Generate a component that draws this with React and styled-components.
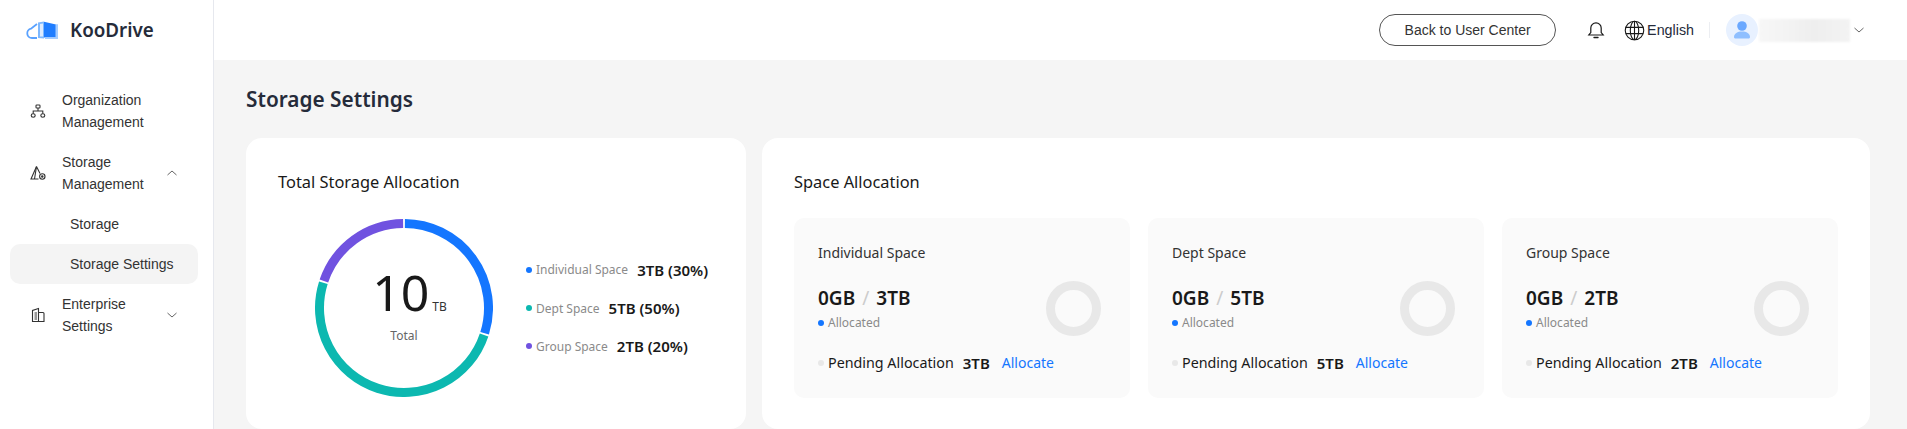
import React from "react";
import styled, { createGlobalStyle } from "styled-components";

const Global = createGlobalStyle`
  html, body { margin: 0; padding: 0; height: 100%; overflow: hidden; }
  body { background: #f5f5f5; font-family: "Noto Sans", "Liberation Sans", sans-serif; }
  #root { height: 429px; }
  * { box-sizing: border-box; }
`;

const Shell = styled.div`display: flex; height: 429px; overflow: hidden;`;
const Sidebar = styled.aside`width: 214px; flex: none; background: #fff; border-right: 1px solid #e6e8ee; font-family: "Liberation Sans", Arial, sans-serif;`;
const Brand = styled.div`height: 60px; display: flex; align-items: center; gap: 12px; padding-left: 26px;`;
const BrandName = styled.span`font-family: "Noto Sans", sans-serif; font-size: 18.800px; font-weight: 600; color: #252b3a;`;
const Nav = styled.nav`display: flex; flex-direction: column; padding: 20px 15px 0 10px;`;
const NavGroup = styled.div`display: flex; align-items: center; height: 62px; padding: 0 20px 0 20px;`;
const NavIcon = styled.span`width: 16px; display: flex; margin-right: 16px; flex: none;`;
const NavLabel = styled.span`flex: 1; font-size: 14px; line-height: 22px; color: #333;`;
const SubItem = styled.div`height: 40px; display: flex; align-items: center; padding-left: 60px; font-size: 14px; color: #333; border-radius: 10px; background: ${p => p.$active ? "#f4f4f4" : "transparent"};`;

const Main = styled.div`flex: 1; min-width: 0; display: flex; flex-direction: column;`;
const Header = styled.header`height: 60px; flex: none; background: #fff; display: flex; align-items: center; justify-content: flex-end; padding-right: 42px;`;
const BackButton = styled.button`width: 177px; height: 32px; border: 1px solid #555; border-radius: 16px; background: #fff; font: 14px "Liberation Sans", Arial, sans-serif; color: #333; padding: 0; margin-right: 31px;`;
const Bell = styled.span`display: flex; margin-right: 19px;`;
const LangBox = styled.div`display: flex; align-items: center; gap: 2px; font: 14.300px "Liberation Sans", Arial, sans-serif; color: #252b3a;`;
const Divider = styled.span`width: 1px; height: 16px; background: #eceef2; margin: 0 16px 0 15px;`;
const Avatar = styled.span`width: 32px; height: 32px; border-radius: 50%; background: #e8f1ff; display: flex; align-items: center; justify-content: center;`;
const Blurred = styled.span`width: 91px; height: 23px; margin-left: 1px; background: linear-gradient(90deg, #f7f7f7, #f3f3f3 30%, #eeeeee 60%, #f3f3f3); filter: blur(1px);`;
const UserChevron = styled.span`display: flex; margin-left: 3px;`;

const Content = styled.main`flex: 1; min-height: 0; padding: 0 37px 0 32px;`;
const PageTitle = styled.h1`margin: 0; height: 78px; display: flex; align-items: center; font-size: 20.800px; font-weight: 600; color: #252b3a;`;
const Cards = styled.div`display: flex; gap: 16px; height: 291px;`;
const Card = styled.section`background: #fff; border-radius: 16px; padding: 32px; flex: ${p => p.$grow ? 1 : "none"}; width: ${p => p.$grow ? "auto" : "500px"}; min-width: 0;`;
const CardTitle = styled.h2`margin: 0; font-size: 16.400px; font-weight: 400; line-height: 24px; color: #191919;`;

const ChartRow = styled.div`display: flex; align-items: center; margin-top: 25px;`;
const Donut = styled.div`position: relative; width: 178px; height: 178px; margin-left: 37px; flex: none;`;
const DonutCenter = styled.div`position: absolute; inset: 0; padding-bottom: 8px; display: flex; flex-direction: column; align-items: center; justify-content: center;`;
const Big = styled.div`display: flex; align-items: baseline; margin-left: 11px; font-size: 50px; line-height: 56px; font-weight: 400; color: #191919;`;
const Unit = styled.span`font-size: 12px; margin-left: 3px; color: #333;`;
const TotalText = styled.div`font-size: 12px; color: #666; margin-top: -8px;`;
const Legend = styled.ul`list-style: none; margin: 0 0 0 33px; padding: 0; display: flex; flex-direction: column; gap: 14.300px;`;
const LegendRow = styled.li`display: flex; align-items: center; height: 24px;`;
const Dot = styled.i`width: 6px; height: 6px; border-radius: 50%; background: ${p => p.$c}; flex: none; margin-right: 4px;`;
const LegendLabel = styled.span`font-size: 12px; color: #8a8a8a; margin-right: 9px;`;
const LegendValue = styled.b`font-size: 15px; font-weight: 600; color: #191919;`;

const Spaces = styled.div`display: flex; gap: 18px; margin-top: 24px;`;
const Space = styled.div`flex: 1; height: 180px; background: #fafafa; border-radius: 10px; padding: 24px; position: relative;`;
const SpaceName = styled.div`font-size: 14px; line-height: 22px; color: #333;`;
const Amount = styled.div`font-size: 19px; font-weight: 600; line-height: 26px; margin-top: 21px; color: #191919;`;
const Slash = styled.span`color: #ccc; font-weight: 400; margin: 0 7px;`;
const AllocRow = styled.div`display: flex; align-items: center; margin-top: 3px; font-size: 12px; color: #8a8a8a; line-height: 18px;`;
const PendingRow = styled.div`display: flex; align-items: center; margin-top: 20px; font-size: 14.300px; line-height: 22px; color: #191919;`;
const PendingValue = styled.b`font-size: 15px; font-weight: 600; margin-left: 9px;`;
const Link = styled.a`font-size: 14px; color: #1476ff; margin-left: 12px;`;
const Ring = styled.div`position: absolute; right: 29px; top: 63px; width: 55px; height: 55px; border: 9px solid #e8e8e8; border-radius: 50%;`;

const Chevron = ({ up }) => (
  <svg width="12" height="12" viewBox="0 0 12 12" fill="none" stroke="#666" strokeWidth="1">
    <path d={up ? "M1.500 8L6 4l4.500 4" : "M1.500 4L6 8l4.500-4"} />
  </svg>
);

const Logo = () => (
  <svg width="32" height="18" viewBox="0 0 32 18">
    <path d="M11 17H6a4.700 4.700 0 0 1-1-9.300L11 3" fill="none" stroke="#5aa2ff" strokeWidth="1.800" />
    <path d="M12 1.500L18 .5V17.500L12 17Z" fill="#7db8ff" />
    <path d="M14 3L17 2.500V15.500L14 15.500Z" fill="#dcebff" />
    <path d="M18 .8L30 3.500V16.500H18Z" fill="#1f7dff" />
    <path d="M29.500 3.200H32V18H19V16.300H29.500Z" fill="#a4ccff" />
  </svg>
);

const OrgIcon = () => (
  <svg width="16" height="16" viewBox="0 0 16 16" fill="none" stroke="#333" strokeWidth="1.100">
    <rect x="6" y="2" width="4" height="3" rx=".8" />
    <ellipse cx="3.200" cy="12.500" rx="2" ry="1.700" />
    <ellipse cx="12.800" cy="12.500" rx="2" ry="1.700" />
    <path d="M8 5v3M3.200 10.800V8h9.600v2.800" />
  </svg>
);
const StorageIcon = () => (
  <svg width="16" height="16" viewBox="0 0 16 16" fill="none" stroke="#333" strokeWidth="1.100">
    <path d="M6.500 1.500L1 14h7.500" />
    <path d="M6.500 1.500l3.500 7M4.500 14l2-12.500" />
    <circle cx="12.300" cy="11.500" r="2.700" />
    <circle cx="12.300" cy="11.500" r=".7" fill="#333" />
  </svg>
);
const EnterpriseIcon = () => (
  <svg width="16" height="16" viewBox="0 0 16 16" fill="none" stroke="#333" strokeWidth="1.100">
    <path d="M2.500 14.500V3.500L8.500 1.500V14.500Z" />
    <path d="M8.500 5.500H13a1 1 0 0 1 1 1V14.500H2.500" />
    <rect x="4.500" y="5" width="2.500" height="8" fill="#999" stroke="none" />
  </svg>
);
const BellIcon = () => (
  <svg width="18" height="18" viewBox="0 0 18 18" fill="none" stroke="#191919" strokeWidth="1.200">
    <path d="M1.800 14h14.400l-2-2.500V7a5.200 5.200 0 0 0-10.400 0v4.500Z" />
    <path d="M7 16.500h4" strokeLinecap="round" strokeWidth="1.400" />
  </svg>
);
const GlobeIcon = () => (
  <svg width="21" height="21" viewBox="0 0 20 20" fill="none" stroke="#191919" strokeWidth="1.050">
    <circle cx="10" cy="10" r="8.800" />
    <ellipse cx="10" cy="10" rx="4" ry="8.800" />
    <path d="M10 1.200V18.800M1.800 7h16.400M1.800 13h16.400" />
  </svg>
);
const PersonIcon = () => (
  <svg width="18" height="20" viewBox="0 0 18 20">
    <circle cx="9" cy="6" r="4.800" fill="#6aa8ff" />
    <path d="M1 17c0-3.500 3.500-5.500 8-5.500s8 2 8 5.500c0 1-.8 1.500-2 1.500H3c-1.200 0-2-.5-2-1.500Z" fill="#8fbfff" />
  </svg>
);

const seg = (a, b, r) => {
  const p = t => {
    const ang = (t - 90) * Math.PI / 180;
    return `${89 + r * Math.cos(ang)} ${89 + r * Math.sin(ang)}`;
  };
  return `M${p(a)}A${r} ${r} 0 ${b - a > 180 ? 1 : 0} 1 ${p(b)}`;
};

const legend = [
  { c: "#1476ff", l: "Individual Space", v: "3TB (30%)" },
  { c: "#0cb8b0", l: "Dept Space", v: "5TB (50%)" },
  { c: "#7052e0", l: "Group Space", v: "2TB (20%)" },
];
const spaces = [
  { n: "Individual Space", t: "3TB" },
  { n: "Dept Space", t: "5TB" },
  { n: "Group Space", t: "2TB" },
];

export default function App() {
  return (
    <Shell>
      <Global />
      <Sidebar>
        <Brand><Logo /><BrandName>KooDrive</BrandName></Brand>
        <Nav>
          <NavGroup><NavIcon><OrgIcon /></NavIcon><NavLabel>Organization Management</NavLabel></NavGroup>
          <NavGroup><NavIcon><StorageIcon /></NavIcon><NavLabel>Storage Management</NavLabel><Chevron up /></NavGroup>
          <SubItem>Storage</SubItem>
          <SubItem $active>Storage Settings</SubItem>
          <NavGroup><NavIcon><EnterpriseIcon /></NavIcon><NavLabel>Enterprise Settings</NavLabel><Chevron /></NavGroup>
        </Nav>
      </Sidebar>
      <Main>
        <Header>
          <BackButton>Back to User Center</BackButton>
          <Bell><BellIcon /></Bell>
          <LangBox><GlobeIcon />English</LangBox>
          <Divider />
          <Avatar><PersonIcon /></Avatar>
          <Blurred />
          <UserChevron><Chevron /></UserChevron>
        </Header>
        <Content>
          <PageTitle>Storage Settings</PageTitle>
          <Cards>
            <Card>
              <CardTitle>Total Storage Allocation</CardTitle>
              <ChartRow>
                <Donut>
                  <svg width="178" height="178" viewBox="0 0 178 178" fill="none" strokeWidth="9">
                    <path d={seg(0.6, 107.4, 84.5)} stroke="#1476ff" />
                    <path d={seg(108.6, 287.4, 84.5)} stroke="#0cb8b0" />
                    <path d={seg(288.6, 359.4, 84.5)} stroke="#7052e0" />
                  </svg>
                  <DonutCenter>
                    <Big>10<Unit>TB</Unit></Big>
                    <TotalText>Total</TotalText>
                  </DonutCenter>
                </Donut>
                <Legend>
                  {legend.map(x => (
                    <LegendRow key={x.l}><Dot $c={x.c} /><LegendLabel>{x.l}</LegendLabel><LegendValue>{x.v}</LegendValue></LegendRow>
                  ))}
                </Legend>
              </ChartRow>
            </Card>
            <Card $grow>
              <CardTitle>Space Allocation</CardTitle>
              <Spaces>
                {spaces.map(s => (
                  <Space key={s.n}>
                    <SpaceName>{s.n}</SpaceName>
                    <Amount>0GB<Slash>/</Slash>{s.t}</Amount>
                    <AllocRow><Dot $c="#1476ff" />Allocated</AllocRow>
                    <PendingRow><Dot $c="#e8e8e8" />Pending Allocation<PendingValue>{s.t}</PendingValue><Link>Allocate</Link></PendingRow>
                    <Ring />
                  </Space>
                ))}
              </Spaces>
            </Card>
          </Cards>
        </Content>
      </Main>
    </Shell>
  );
}
